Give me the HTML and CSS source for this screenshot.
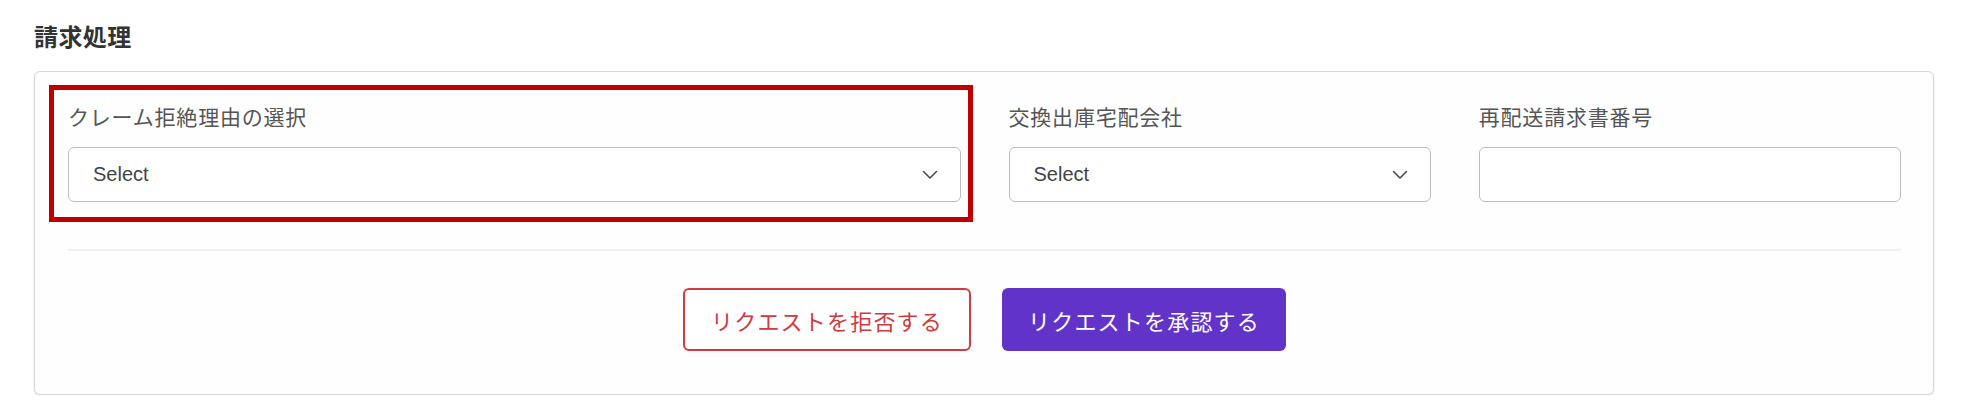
FILE: index.html
```html
<!DOCTYPE html>
<html lang="ja">
<head>
<meta charset="utf-8">
<title>請求処理</title>
<link rel="stylesheet" href="styles.css">
</head>
<body>
<div class="page">
  <h2 class="title">請求処理</h2>
  <section class="card">
    <div class="fields">
      <div class="field field-wide">
        <div class="highlight"></div>
        <label class="label">クレーム拒絶理由の選択</label>
        <div class="select">
          <span class="select-text">Select</span>
          <svg class="chevron" width="16" height="10" viewBox="0 0 16 10"><path d="M1.5 1.5 L8 8 L14.5 1.5" fill="none" stroke="#444" stroke-width="1.5" stroke-linecap="round" stroke-linejoin="round"/></svg>
        </div>
      </div>
      <div class="field field-narrow">
        <label class="label">交換出庫宅配会社</label>
        <div class="select">
          <span class="select-text">Select</span>
          <svg class="chevron" width="16" height="10" viewBox="0 0 16 10"><path d="M1.5 1.5 L8 8 L14.5 1.5" fill="none" stroke="#444" stroke-width="1.5" stroke-linecap="round" stroke-linejoin="round"/></svg>
        </div>
      </div>
      <div class="field field-narrow">
        <label class="label">再配送請求書番号</label>
        <div class="input"></div>
      </div>
    </div>
    <hr class="divider">
    <div class="actions">
      <button class="btn btn-reject">リクエストを拒否する</button>
      <button class="btn btn-approve">リクエストを承認する</button>
    </div>
  </section>
</div>
</body>
</html>
```

FILE: styles.css
```css
* { box-sizing: border-box; }
html, body { margin: 0; padding: 0; background: #ffffff; }
body {
  font-family: "Noto Sans CJK JP", "Noto Sans", sans-serif;
  color: #333;
}
.page {
  padding: 20px 28px 0 34px;
}
.title {
  margin: 0 0 19px 0;
  font-size: 24px;
  line-height: 32px;
  font-weight: 700;
  letter-spacing: 0.4px;
  color: #333;
}
.card {
  width: 1900px;
  border: 1px solid #d6d6d6;
  border-radius: 6px;
  box-shadow: 0 1px 2px rgba(0,0,0,0.12);
  background: #fefefe;
  padding: 30px 32px 43px 33px;
}
.fields {
  display: grid;
  grid-template-columns: repeat(12, 1fr);
  column-gap: 48px;
}
.field { position: relative; display: flex; flex-direction: column; }
.field-wide { grid-column: span 6; }
.field-narrow { grid-column: span 3; }
.highlight {
  position: absolute;
  left: -19px;
  right: -12px;
  top: -17px;
  bottom: -20px;
  border: 5px solid #c00000;
  pointer-events: none;
}
.label {
  font-size: 21px;
  line-height: 28px;
  letter-spacing: 0.8px;
  color: #555;
  margin-bottom: 17px;
}
.select, .input {
  height: 55px;
  border: 1px solid #bdbdbd;
  border-radius: 6px;
  background: #fff;
}
.select {
  display: flex;
  align-items: center;
  justify-content: space-between;
  padding: 0 22px 0 24px;
}
.select-text {
  font-family: "Liberation Sans", Arial, sans-serif;
  font-size: 20px;
  color: #444;
}
.chevron { display: block; }
.divider {
  border: 0;
  border-top: 2px solid #f0f0f0;
  margin: 47px 0 37px 0;
}
.actions {
  display: flex;
  justify-content: center;
  gap: 31px;
}
.btn {
  height: 63px;
  padding: 0 20px;
  border-radius: 6px;
  font-family: "Noto Sans CJK JP", "Noto Sans", sans-serif;
  font-size: 22px;
  letter-spacing: 1.2px;
  cursor: pointer;
}
.btn-reject {
  width: 288px;
  background: #fff;
  border: 2px solid #d13a3f;
  color: #d13a3f;
}
.btn-approve {
  width: 284px;
  background: #6233c8;
  border: 0;
  color: #fff;
}
```
